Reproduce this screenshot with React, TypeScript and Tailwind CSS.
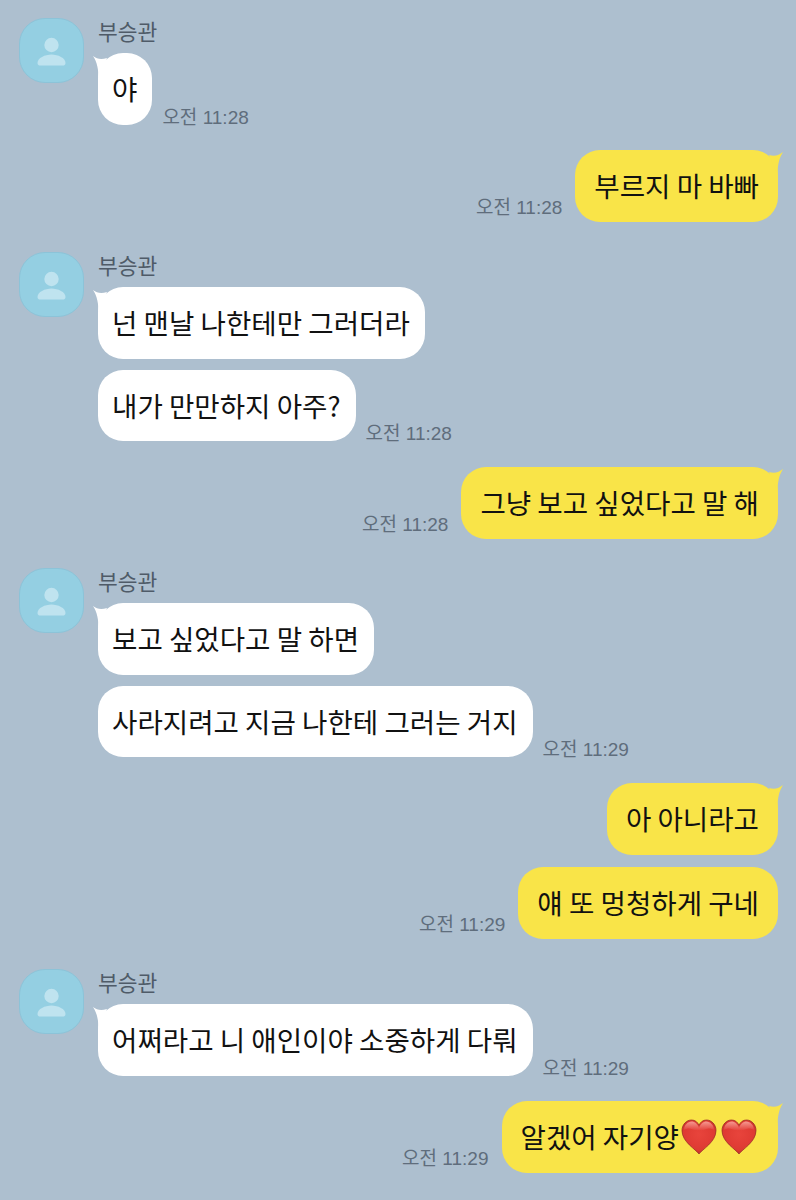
import React from "react";

const FONT = "font-['Noto_Sans_CJK_KR','Noto_Sans',sans-serif]";

function Avatar() {
  return (
    <div className="w-[65px] h-[65px] shrink-0 rounded-[26px] bg-[#94cfe2] border border-[#8cc3d8] flex items-center justify-center">
      <svg width="31" height="30" viewBox="0 0 31 30">
        <circle cx="15.5" cy="9" r="7.2" fill="#bfe3ef" />
        <path d="M1.5 27 C1.5 22 9 18.5 15.5 18.5 C22 18.5 29.5 22 29.5 27 C29.5 29 28 29.5 27 29.5 L4 29.5 C3 29.5 1.5 29 1.5 27 Z" fill="#bfe3ef" />
      </svg>
    </div>
  );
}

function Time({ t, className = "" }: { t: string; className?: string }) {
  return (
    <span className={`font-['Liberation_Sans','Noto_Sans_CJK_KR',sans-serif] text-[19px] leading-[24px] text-[#5f6d7c] whitespace-nowrap ${className}`}>
      {t}
    </span>
  );
}

function InBubble({ tail, children }: { tail?: boolean; children: React.ReactNode }) {
  return (
    <div className="relative h-[71.5px] rounded-[25px] pl-[14px] pr-[15px] flex items-center text-[27.6px] text-[#111] whitespace-nowrap bg-white">
      {children}
      {tail && (
        <svg className="absolute left-[-6px] top-0" width="24" height="28" viewBox="0 0 24 28">
          <path d="M1 3 C5 6 9 7 15 5 L6 26 C7 17 5 9 1 3 Z" fill="#ffffff" />
        </svg>
      )}
    </div>
  );
}

function OutBubble({ tail, children }: { tail?: boolean; children: React.ReactNode }) {
  return (
    <div className="relative h-[72px] rounded-[25px] pl-[19px] pr-[19px] flex items-center text-[27.6px] text-[#111] whitespace-nowrap bg-[#f9e448]">
      {children}
      {tail && (
        <svg className="absolute right-[-6px] top-0" width="24" height="28" viewBox="0 0 24 28">
          <path d="M23 2 C19 5 15 7 9 5 L18 26 C17 17 19 8 23 2 Z" fill="#f9e448" />
        </svg>
      )}
    </div>
  );
}

function In({ rows, mt }: { rows: { text: string; time?: string }[]; mt: string }) {
  return (
    <div className={`flex gap-[14px] ${mt}`}>
      <Avatar />
      <div className="flex flex-col">
        <div className="text-[21.5px] leading-[26px] h-[35px] text-[#4f5b68]">부승관</div>
        <div className="flex flex-col gap-[11px]">
          {rows.map((r, i) => (
            <div key={i} className="flex items-end gap-[10px]">
              <InBubble tail={i === 0}>{r.text}</InBubble>
              {r.time && <Time t={r.time} className="mb-[-5px]" />}
            </div>
          ))}
        </div>
      </div>
    </div>
  );
}

function Heart({ id }: { id: string }) {
  return (
    <svg className="inline-block shrink-0" width="36" height="36" viewBox="0 0 36 36">
      <defs>
        <radialGradient id={id} cx="0.5" cy="0.42" r="0.62">
          <stop offset="0" stopColor="#e8443c" />
          <stop offset="0.75" stopColor="#de3a33" />
          <stop offset="1" stopColor="#a82a22" />
        </radialGradient>
        <linearGradient id={`${id}g`} x1="0" y1="0" x2="0" y2="1">
          <stop offset="0" stopColor="#f8a49c" stopOpacity="0.9" />
          <stop offset="1" stopColor="#f8a49c" stopOpacity="0" />
        </linearGradient>
      </defs>
      <path d="M18 35 C15 30.5 1 23 1 11.5 C1 5.5 5.5 1 10.5 1 C14 1 16.8 3 18 6.5 C19.2 3 22 1 25.5 1 C30.5 1 35 5.5 35 11.5 C35 23 21 30.5 18 35 Z" fill={`url(#${id})`} stroke="#9c3028" strokeWidth="0.8" />
      <path d="M3 11 C3 6 7 2.5 10.5 2.5 C14 2.5 16.5 5 18 9 C19.5 5 22 2.5 25.5 2.5 C29 2.5 33 6 33 11 C30 9 27 9 24 10.5 C21 12 15 12 12 10.5 C9 9 6 9 3 11 Z" fill={`url(#${id}g)`} />
    </svg>
  );
}

function Out({ rows, mt }: { rows: { text: React.ReactNode; time?: string }[]; mt: string }) {
  return (
    <div className={`flex flex-col items-end gap-[12px] ${mt}`}>
      {rows.map((r, i) => (
        <div key={i} className="flex items-end gap-[13px]">
          {r.time && <Time t={r.time} className="mb-[2px]" />}
          <OutBubble tail={i === 0}>{r.text}</OutBubble>
        </div>
      ))}
    </div>
  );
}

export default function App() {
  return (
    <div className={`${FONT} w-[796px] h-[1200px] overflow-hidden bg-[#adbfcf] pt-[18px] pl-[19px] pr-[18px] flex flex-col`}>
      <In mt="" rows={[{ text: "야", time: "오전 11:28" }]} />
      <Out mt="mt-[25.5px]" rows={[{ text: "부르지 마 바빠", time: "오전 11:28" }]} />
      <In mt="mt-[30px]" rows={[{ text: "넌 맨날 나한테만 그러더라" }, { text: "내가 만만하지 아주?", time: "오전 11:28" }]} />
      <Out mt="mt-[26px]" rows={[{ text: "그냥 보고 싶었다고 말 해", time: "오전 11:28" }]} />
      <In mt="mt-[29px]" rows={[{ text: "보고 싶었다고 말 하면" }, { text: "사라지려고 지금 나한테 그러는 거지", time: "오전 11:29" }]} />
      <Out mt="mt-[26px]" rows={[{ text: "아 아니라고" }, { text: "얘 또 멍청하게 구네", time: "오전 11:29" }]} />
      <In mt="mt-[30px]" rows={[{ text: "어쩌라고 니 애인이야 소중하게 다뤄", time: "오전 11:29" }]} />
      <Out
        mt="mt-[25.5px]"
        rows={[
          {
            text: (
              <span className="flex items-center mr-[2px]">
                알겠어 자기양
                <span className="w-[2px]" />
                <Heart id="h1" />
                <span className="w-[4px]" />
                <Heart id="h2" />
              </span>
            ),
            time: "오전 11:29",
          },
        ]}
      />
    </div>
  );
}
